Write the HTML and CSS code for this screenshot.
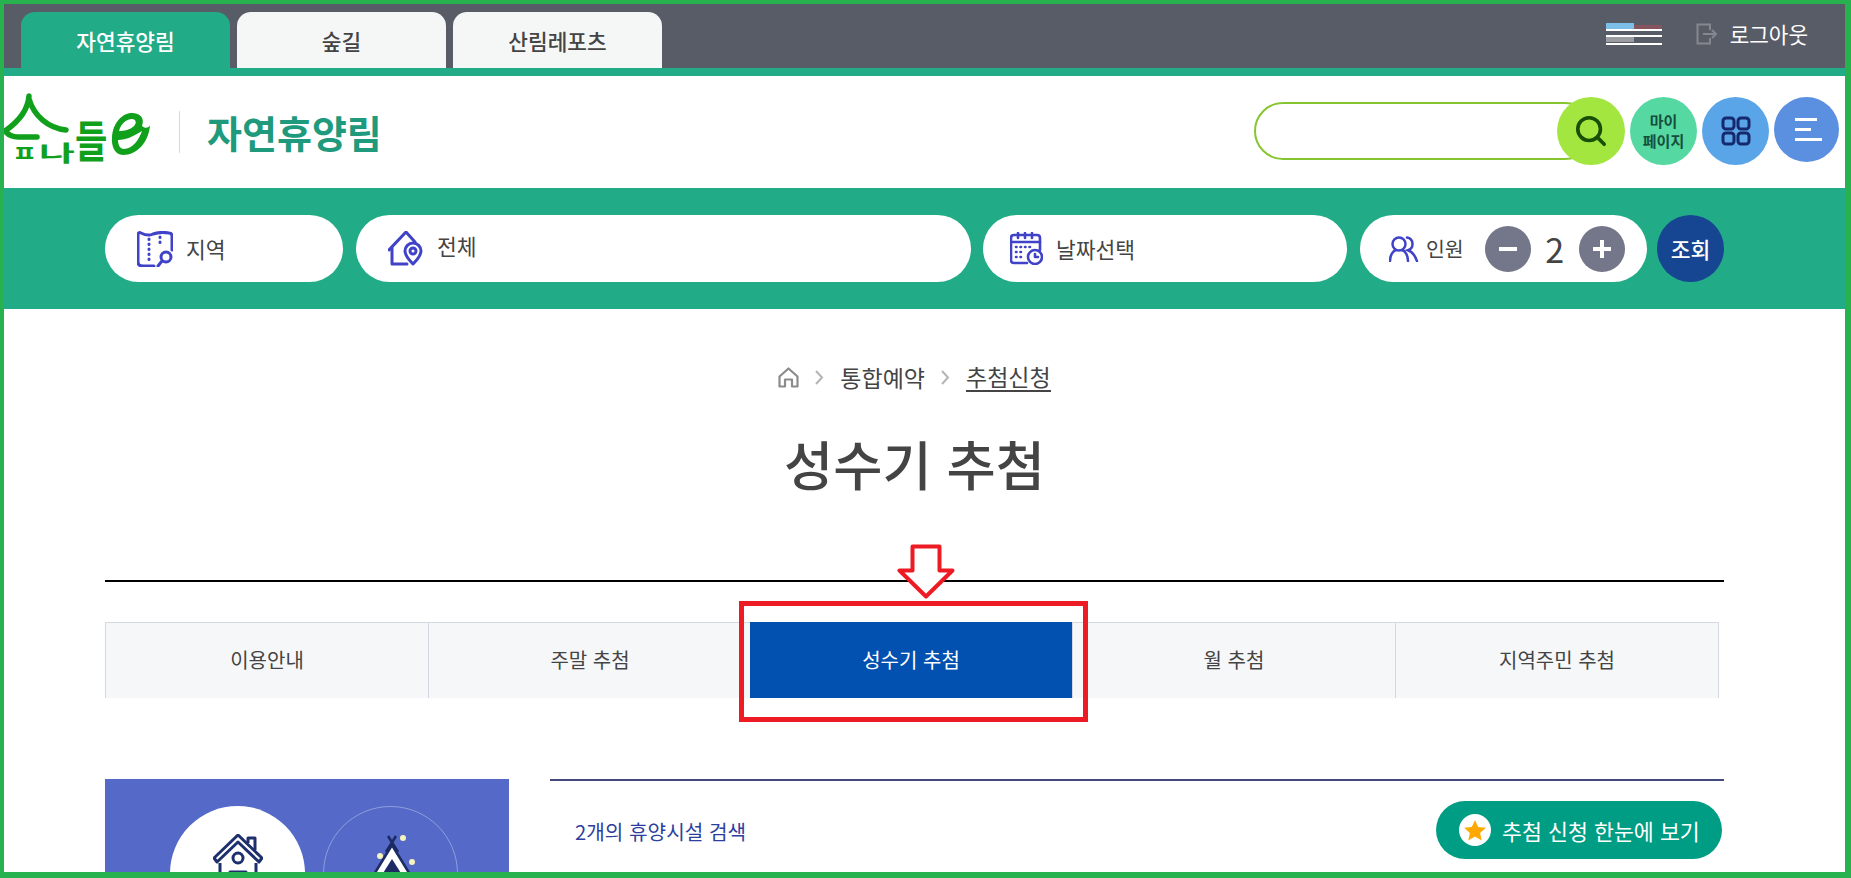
FILE: index.html
```html
<!DOCTYPE html>
<html lang="ko">
<head>
<meta charset="utf-8">
<title>성수기 추첨</title>
<link rel="stylesheet" href="styles.css">
</head>
<body>
<div class="frame">
  <div class="topbar">
    <nav class="site-tabs">
      <a class="site-tab is-active">자연휴양림</a>
      <a class="site-tab">숲길</a>
      <a class="site-tab">산림레포츠</a>
    </nav>
    <div class="util">
      <svg class="flag" width="56" height="22" viewBox="0 0 56 22">
        <rect x="0" y="0" width="28" height="6" fill="#7cc0ea"/>
        <rect x="28" y="2" width="28" height="4" fill="#84545f"/>
        <rect x="0" y="6" width="56" height="2" fill="#fff"/>
        <rect x="0" y="14" width="28" height="5" fill="#9a9c9f"/>
        <rect x="0" y="12" width="56" height="2" fill="#fff"/>
        <rect x="0" y="20" width="56" height="2" fill="#fff"/>
      </svg>
      <a class="logout">
        <svg width="22" height="22" viewBox="0 0 22 22" fill="none" stroke="#85878f" stroke-width="2">
          <path d="M14 7V1.500H1.500v19H14V15"/>
          <path d="M7 11h13M16 7l4 4-4 4"/>
        </svg>
        <span>로그아웃</span>
      </a>
    </div>
  </div>

  <header class="masthead">
    <div class="brand">
      <svg class="logo" width="150" height="76" viewBox="0 0 150 76" role="img" aria-label="숲나들e">
        <path class="logo-line" d="M25 6C24 20 14 32 1 41M25 9C30 26 44 38 62 40"/>
        <path class="logo-line" d="M1 41c4 5 8 6 13 6h19"/>
        <text class="logo-text" transform="translate(8 71) scale(1.050 .85)">ㅍ</text>
        <text class="logo-text" transform="translate(35 71) scale(1.500 .85)">나</text>
        <text class="logo-text" transform="translate(71 68) scale(1.350 1.7)">들</text>
        <path class="logo-e" fill-rule="evenodd" d="M146 35C145 52 133 65 119 65 111 65 107 56 108 47 109 33 118 23 128 23 136 23 141 28 138 36 141 39 145 38 146 35zM115 41C117 33 123 29 128 29 132 29 133 33 130 36 126 40 120 41 115 41zM114 50C122 50 130 46 138 41 135 50 128 59 120 59 116 59 114 55 114 50z"/>
      </svg>
      <span class="brand-div"></span>
      <span class="brand-name">자연휴양림</span>
    </div>
    <div class="tools">
      <div class="search">
        <input class="search-input" type="text" aria-label="검색">
        <button class="round round-search" aria-label="검색">
          <svg width="34" height="34" viewBox="0 0 36 36" fill="none" stroke="#174f06" stroke-width="3.800" stroke-linecap="round">
            <circle cx="16" cy="16" r="12"/>
            <path d="M25 25l7 7"/>
          </svg>
        </button>
      </div>
      <a class="round round-my">마이<br>페이지</a>
      <a class="round round-grid" aria-label="전체">
        <svg width="30" height="30" viewBox="0 0 30 30" fill="none" stroke="#15296c" stroke-width="3">
          <rect x="2" y="2" width="11" height="11" rx="3"/>
          <rect x="17" y="2" width="11" height="11" rx="3"/>
          <rect x="2" y="17" width="11" height="11" rx="3"/>
          <rect x="17" y="17" width="11" height="11" rx="3"/>
        </svg>
      </a>
      <a class="round round-menu" aria-label="메뉴">
        <span class="bar bar-a"></span>
        <span class="bar bar-b"></span>
        <span class="bar bar-c"></span>
      </a>
    </div>
  </header>

  <section class="finder">
    <div class="pill pill-region">
      <svg width="36" height="36" viewBox="0 0 36 36" fill="none" stroke="#4043c8" stroke-width="3" stroke-linecap="round" stroke-linejoin="round">
        <path d="M17 35H6c-3 0-5-1-5-4V4c0-2 1-3 3-2 4 2 8 3 12 1 6-2 11-2 16-1 2 0 3 1 3 3v14"/>
        <path d="M12 8v24M23 6v10" stroke-dasharray="0.500 4.500"/>
        <circle cx="29" cy="26" r="5"/>
        <path d="M25 30l-4 5"/>
      </svg>
      <span>지역</span>
    </div>
    <div class="pill pill-type">
      <svg width="36" height="35" viewBox="0 0 36 35" fill="none" stroke="#4043c8" stroke-width="3" stroke-linecap="round" stroke-linejoin="round">
        <path d="M1 19L18 1l9 10"/>
        <path d="M4 17v16h15"/>
        <path d="M25 33c-5-5-8-9-8-13a8 8 0 0 1 16 0c0 4-3 8-8 13z"/>
        <circle cx="25" cy="20" r="3"/>
      </svg>
      <span class="pill-raise">전체</span>
    </div>
    <div class="pill pill-date">
      <svg width="33" height="33" viewBox="0 0 33 33" fill="none" stroke="#4043c8" stroke-width="2.600" stroke-linecap="round" stroke-linejoin="round">
        <path d="M17 31H4c-2 0-3-1-3-3V6c0-2 1-3 3-3h23c2 0 3 1 3 3v12"/>
        <path d="M8 1v5M15 1v5M22 1v5M1 10h29"/>
        <path d="M6 15h14M6 20h9M6 25h9" stroke-dasharray="0.500 4"/>
        <circle cx="25" cy="25" r="7"/>
        <path d="M25 22v3h3"/>
      </svg>
      <span>날짜선택</span>
    </div>
    <div class="pill pill-people">
      <svg width="30" height="26" viewBox="0 0 30 26" fill="none" stroke="#4043c8" stroke-width="2.500" stroke-linecap="round">
        <circle cx="10" cy="8" r="6.500"/>
        <path d="M1 25c0-6 3-10 6-11M19 25c0-6-3-10-6-11"/>
        <path d="M18 1.600a6.500 6.500 0 0 1 1 12.600c3 1 7 5 9 11"/>
      </svg>
      <span class="people-label">인원</span>
      <button class="step">
        <svg width="22" height="22" viewBox="0 0 22 22"><rect x="2" y="9" width="18" height="4" fill="#fff"/></svg>
      </button>
      <span class="count">2</span>
      <button class="step">
        <svg width="22" height="22" viewBox="0 0 22 22"><path d="M9 2h4v7h7v4h-7v7H9v-7H2V9h7z" fill="#fff"/></svg>
      </button>
    </div>
    <button class="go">조회</button>
  </section>

  <main class="content">
    <div class="crumbs">
      <svg width="21" height="21" viewBox="0 0 21 21" fill="none" stroke="#8b8b8b" stroke-width="2.200" stroke-linejoin="round">
        <path d="M1.500 9.500L10.500 1.500l9 8V19.500h-5.500V12.500h-7V19.500H1.500z"/>
      </svg>
      <svg class="chev" width="9" height="15" viewBox="0 0 9 15" fill="none" stroke="#b5b5b5" stroke-width="2"><path d="M1 1l6 6.500L1 14"/></svg>
      <a class="crumb">통합예약</a>
      <svg class="chev" width="9" height="15" viewBox="0 0 9 15" fill="none" stroke="#b5b5b5" stroke-width="2"><path d="M1 1l6 6.500L1 14"/></svg>
      <a class="crumb crumb-now">추첨신청</a>
    </div>
    <h1 class="title">성수기 추첨</h1>
    <hr class="rule">
    <ul class="tabs">
      <li class="tab">이용안내</li>
      <li class="tab">주말 추첨</li>
      <li class="tab tab-on">성수기 추첨</li>
      <li class="tab">월 추첨</li>
      <li class="tab">지역주민 추첨</li>
    </ul>
    <div class="columns">
      <aside class="side">
        <div class="kind kind-on">
          <svg width="50" height="66" viewBox="0 0 50 66" fill="none" stroke="#1e2f6e" stroke-width="3" stroke-linejoin="round">
            <path d="M1 24L25 1l24 23-3 4L25 8 4 28z"/>
            <path d="M35 9V4h7v12"/>
            <path d="M7 29v37M43 29v37"/>
            <circle cx="25" cy="24" r="5"/>
            <path d="M17 62V38h16v24"/>
          </svg>
        </div>
        <div class="kind">
          <svg width="50" height="66" viewBox="0 0 50 66" fill="none">
            <path d="M22 1l10 16M30 1L20 17" stroke="#1c2b63" stroke-width="2.600"/>
            <path d="M26 10L4 46h44z" fill="#fff" stroke="#1c2b63" stroke-width="2.600"/>
            <path d="M26 24L12 46h28z" fill="#1c2b63"/>
            <circle cx="37" cy="3" r="3" fill="#f6f3bd"/>
            <circle cx="14" cy="21" r="3" fill="#f6f3bd"/>
            <circle cx="46" cy="27" r="3" fill="#f6f3bd"/>
          </svg>
        </div>
      </aside>
      <section class="results">
        <div class="results-head">
          <p class="found">2개의 휴양시설 검색</p>
          <a class="lottery-btn">
            <span class="star">
              <svg width="22" height="21" viewBox="0 0 22 21"><path d="M11 0l3.200 7 7.600.8-5.700 5.100 1.600 7.500L11 16.600l-6.700 3.800 1.600-7.500L.2 7.800 7.800 7z" fill="#ffa800"/></svg>
            </span>
            <span>추첨 신청 한눈에 보기</span>
          </a>
        </div>
      </section>
    </div>
  </main>

  <div class="mark-box"></div>
  <svg class="mark-arrow" width="60" height="56" viewBox="0 0 60 56">
    <path d="M15.500 2.500h27v24h13L29 52.500 2.500 26.500h13z" fill="#fff" stroke="#ed1c24" stroke-width="4" stroke-linejoin="round"/>
  </svg>
</div>
</body>
</html>
```

FILE: styles.css
```css
* { box-sizing: border-box; }
html, body { margin: 0; padding: 0; }
body {
  font-family: "Noto Sans CJK KR", "Noto Sans", sans-serif;
  color: #444;
  background: #fff;
}
a { color: inherit; text-decoration: none; }
button { font-family: inherit; border: 0; padding: 0; cursor: pointer; }

.frame {
  position: relative;
  width: 1851px;
  height: 878px;
  overflow: hidden;
  border-style: solid;
  border-color: #27b24f;
  border-width: 4px 6px 6px 4px;
}

/* top bar */
.topbar {
  height: 72px;
  background: #585c67;
  border-bottom: 8px solid #22ab87;
  padding-left: 17px;
  display: flex;
  justify-content: space-between;
}
.site-tabs { display: flex; gap: 7px; align-items: flex-end; }
.site-tab {
  width: 209px;
  height: 56px;
  border-radius: 14px 14px 0 0;
  background: #f5f7f7;
  color: #444;
  font-size: 21.400px;
  font-weight: 500;
  display: flex;
  align-items: center;
  justify-content: center;
}
.site-tab.is-active { background: #22ab87; color: #fff; }
.util { display: flex; align-items: flex-start; padding: 19px 37px 0 0; }
.flag { display: block; }
.logout {
  display: flex;
  align-items: center;
  margin-left: 34px;
  color: #fff;
  font-size: 21.300px;
  line-height: 22px;
  gap: 12px;
}

/* masthead */
.masthead {
  height: 112px;
  display: flex;
  justify-content: space-between;
  padding-right: 6px;
}
.brand { display: flex; align-items: center; height: 100%; }
.logo { display: block; margin-bottom: 8px; overflow: visible; }
.logo-line { fill: none; stroke: #11a01c; stroke-width: 5.500; stroke-linecap: round; }
.logo-text { fill: #11a01c; font-size: 26px; font-weight: 700; }
.logo-e { fill: #11a01c; }
.brand-div { width: 1px; height: 42px; background: #d8d8d8; margin: 0 27px 0 25px; }
.brand-name { font-size: 38px; font-weight: 700; color: #1f9a7c; line-height: 1; }
.tools { display: flex; align-items: flex-start; gap: 5px; padding-top: 21px; }
.search { display: flex; align-items: center; }
.search-input {
  width: 340px;
  height: 58px;
  border: 2px solid #86c52e;
  border-radius: 29px;
  background: #fff;
  outline: none;
}
.round {
  width: 67px;
  height: 68px;
  border-radius: 50%;
  display: flex;
  flex-direction: column;
  align-items: center;
  justify-content: center;
}
.round-search { width: 68px; margin-left: -37px; background: #a2e63f; position: relative; }
.round-my {
  background: #55d8a2;
  color: #154f3d;
  font-size: 15px;
  font-weight: 700;
  line-height: 20px;
  text-align: center;
}
.round-grid { background: #5aa5e8; }
.round-menu { width: 65px; height: 65px; background: #5b8fe0; align-items: flex-start; padding-left: 21px; gap: 7px; }
.bar { display: block; height: 3px; background: #fff; }
.bar-a { width: 22px; }
.bar-b { width: 16px; }
.bar-c { width: 27px; }

/* finder */
.finder {
  height: 121px;
  background: #22ab87;
  padding: 27px 121px 0 101px;
  display: flex;
  align-items: flex-start;
  gap: 12px;
}
.pill {
  height: 67px;
  border-radius: 34px;
  background: #fff;
  display: flex;
  align-items: center;
  font-size: 21.500px;
  color: #444;
}
.pill span { line-height: 1; }
.pill-region { width: 238px; padding-left: 32px; gap: 13px; }
.pill-type { width: 615px; margin-left: 1px; padding-left: 32px; gap: 13px; }
.pill-raise { margin-top: -6px; }
.pill-date { width: 364px; padding-left: 27px; gap: 13px; }
.pill-people { width: 287px; padding-left: 29px; margin-left: 1px; }
.people-label { margin-left: 7px; margin-right: 21px; font-size: 20.500px; }
.step {
  width: 46px;
  height: 46px;
  border-radius: 50%;
  background: #747689;
  display: flex;
  align-items: center;
  justify-content: center;
}
.count { width: 48px; text-align: center; font-size: 34px; color: #444; }
.go {
  width: 67px;
  height: 67px;
  margin-left: -2px;
  border-radius: 50%;
  background: #164591;
  color: #fff;
  font-size: 21.500px;
  font-weight: 500;
}

/* content */
.content { padding: 0 121px 0 101px; }
.crumbs {
  display: flex;
  align-items: center;
  justify-content: center;
  padding-top: 52px;
  height: 84px;
  gap: 16px;
  font-size: 23px;
}
.crumb { line-height: 30px; display: block; color: #444; }
.crumb-now { border-bottom: 2px solid #444; line-height: 28px; }
.title {
  margin: 40px 0 0;
  text-align: center;
  font-size: 53.500px;
  font-weight: 500;
  line-height: 60px;
  color: #444;
}
.rule { margin: 87px 0 0; height: 2px; border: 0; background: #000; }
.tabs {
  list-style: none;
  margin: 40px 5px 0 0;
  padding: 0;
  display: flex;
}
.tab {
  flex: 1 1 0;
  height: 76px;
  padding-bottom: 2px;
  background: #f6f7f9;
  border: 1px solid #d4d6e0;
  border-width: 1px 0 0 1px;
  display: flex;
  align-items: center;
  justify-content: center;
  font-size: 20px;
  color: #444;
}
.tab:last-child { border-right: 1px solid #d4d6e0; }
.tab-on { background: #0250b0; color: #fff; border: 0; margin-left: -1px; }
.columns { display: flex; gap: 41px; margin-top: 81px; }
.side {
  width: 404px;
  height: 200px;
  background: #5469c8;
  padding: 27px 0 0 65px;
  display: flex;
  gap: 18px;
  align-items: flex-start;
}
.kind {
  width: 135px;
  height: 135px;
  border-radius: 50%;
  border: 1px solid rgba(255, 255, 255, .35);
  display: flex;
  justify-content: center;
  padding-top: 28px;
}
.kind-on { background: #fff; border: 0; }
.results { flex: 1; border-top: 2px solid #444a7c; }
.results-head {
  display: flex;
  align-items: center;
  justify-content: space-between;
  padding: 20px 2px 0 25px;
}
.found { margin: 2px 0 0; font-size: 20.200px; color: #2d3f9e; }
.lottery-btn {
  width: 286px;
  height: 58px;
  border-radius: 29px;
  background: #009d85;
  color: #fff;
  font-size: 21.700px;
  display: flex;
  align-items: center;
  padding-left: 23px;
  gap: 11px;
}
.star {
  width: 32px;
  height: 32px;
  border-radius: 50%;
  background: #fff;
  display: flex;
  align-items: center;
  justify-content: center;
}

/* annotation overlay */
.mark-box {
  position: absolute;
  left: 735px;
  top: 597px;
  width: 349px;
  height: 121px;
  border: 5px solid #ed1c24;
}
.mark-arrow { position: absolute; left: 893px; top: 540px; }
```
